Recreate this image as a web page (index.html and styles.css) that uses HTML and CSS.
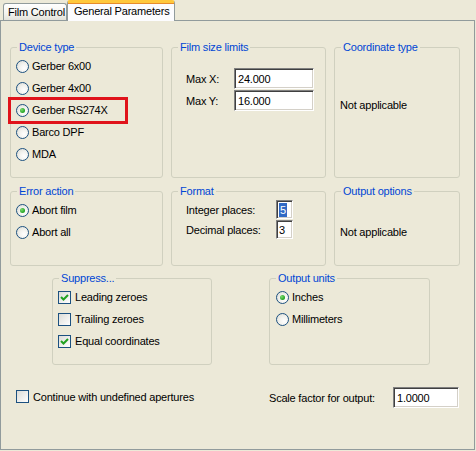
FILE: index.html
```html
<!DOCTYPE html>
<html>
<head>
<meta charset="utf-8">
<link rel="stylesheet" href="styles.css">
</head>
<body>
<div class="window">
  <div class="tabs">
    <div class="tab">Film Control</div>
    <div class="tab active">General Parameters</div>
  </div>
  <div class="panel">
    <div class="row row1">
      <fieldset class="group g-device">
        <legend>Device type</legend>
        <div class="list">
          <div class="opt"><span class="radio"></span><span>Gerber 6x00</span></div>
          <div class="opt"><span class="radio"></span><span>Gerber 4x00</span></div>
          <div class="opt mark"><span class="radio on"></span><span>Gerber RS274X</span><span class="annot"></span></div>
          <div class="opt"><span class="radio"></span><span>Barco DPF</span></div>
          <div class="opt"><span class="radio"></span><span>MDA</span></div>
        </div>
      </fieldset>
      <fieldset class="group g-film">
        <legend>Film size limits</legend>
        <div class="form film-form">
          <span class="lbl">Max X:</span><span class="input wide">24.000</span>
          <span class="lbl">Max Y:</span><span class="input wide">16.000</span>
        </div>
      </fieldset>
      <fieldset class="group g-coord">
        <legend>Coordinate type</legend>
        <div class="na na1">Not applicable</div>
      </fieldset>
    </div>
    <div class="row row2">
      <fieldset class="group g-device">
        <legend>Error action</legend>
        <div class="list">
          <div class="opt"><span class="radio on"></span><span>Abort film</span></div>
          <div class="opt"><span class="radio"></span><span>Abort all</span></div>
        </div>
      </fieldset>
      <fieldset class="group g-film">
        <legend>Format</legend>
        <div class="form fmt-form">
          <span class="lbl">Integer places:</span><span class="input small"><span class="sel">5</span></span>
          <span class="lbl">Decimal places:</span><span class="input small">3</span>
        </div>
      </fieldset>
      <fieldset class="group g-coord">
        <legend>Output options</legend>
        <div class="na na2">Not applicable</div>
      </fieldset>
    </div>
    <div class="row row3">
      <fieldset class="group g-suppress">
        <legend>Suppress...</legend>
        <div class="list">
          <div class="opt cb"><span class="check on"><svg viewBox="0 0 11 11" width="11" height="11"><path d="M2 5 L4.5 7.5 L9 3" fill="none" stroke="#21A121" stroke-width="2"/></svg></span><span>Leading zeroes</span></div>
          <div class="opt cb"><span class="check"></span><span>Trailing zeroes</span></div>
          <div class="opt cb"><span class="check on"><svg viewBox="0 0 11 11" width="11" height="11"><path d="M2 5 L4.5 7.5 L9 3" fill="none" stroke="#21A121" stroke-width="2"/></svg></span><span>Equal coordinates</span></div>
        </div>
      </fieldset>
      <fieldset class="group g-units">
        <legend>Output units</legend>
        <div class="list">
          <div class="opt"><span class="radio on"></span><span>Inches</span></div>
          <div class="opt"><span class="radio"></span><span>Millimeters</span></div>
        </div>
      </fieldset>
    </div>
    <div class="row bottom">
      <div class="opt cb cont"><span class="check"></span><span>Continue with undefined apertures</span></div>
      <div class="scale"><span class="lbl scale-lbl">Scale factor for output:</span><span class="input scale-in">1.0000</span></div>
    </div>
  </div>
</div>
</body>
</html>
```
FILE: styles.css
```css
* { box-sizing: border-box; }
html, body { margin: 0; padding: 0; }
body {
  background: #ECE9D8;
  font-family: "Liberation Sans", Arial, sans-serif;
  font-size: 11px;
  letter-spacing: -0.2px;
  color: #000;
  width: 476px;
  height: 451px;
  overflow: hidden;
}
.window { width: 476px; height: 451px; }
.tabs {
  height: 20px;
  display: flex;
  align-items: flex-end;
  padding-left: 3px;
  position: relative;
  z-index: 2;
}
.tab {
  height: 17px;
  width: 64px;
  border: 1px solid #919B9C;
  border-bottom: none;
  border-radius: 3px 3px 0 0;
  background: linear-gradient(#FFFFFF, #F3F3EF 60%, #E3E2DA);
  padding: 2px 0 0 4px;
  line-height: 13px;
  white-space: nowrap;
}
.tab.active {
  width: 108px;
  height: 21px;
  margin-bottom: -1px;
  background: #FCFCFE;
  border-top: 3px solid #FFC83C;
  padding-top: 2px;
  padding-left: 6px;
  box-shadow: inset 0 1px 0 #E68B2C;
  border-radius: 3px 3px 0 0;
}
.panel {
  width: 475px;
  height: 430px;
  border: 1px solid #919B9C;
  padding: 20px 0 0 9px;
  display: flex;
  flex-direction: column;
}
.row { display: flex; }
.row1 { gap: 8px; }
.row2 { gap: 8px; margin-top: 7px; }
.row3 { gap: 57px; margin-top: 6px; margin-left: 42px; }

.group {
  margin: 0;
  padding: 0;
  min-inline-size: 0;
  border: 1px solid #D0D0BF;
  border-radius: 3px;
}
.group legend {
  color: #0046D5;
  padding: 0 2px;
  margin-left: 6px;
  line-height: 13px;
  height: 13px;
}
.row1 .group { height: 137px; }
.row2 .group { height: 81px; }
.row3 .group { height: 93px; }
.g-device { width: 153px; }
.g-film { width: 155px; }
.g-coord { width: 126px; }
.g-suppress { width: 160px; }
.g-units { width: 161px; }

.list { padding: 1px 0 0 5px; display: flex; flex-direction: column; }
.g-units .list { padding-left: 6px; }
.opt {
  height: 22px;
  display: flex;
  align-items: center;
  gap: 3px;
  white-space: nowrap;
}
.opt.mark { position: relative; }
.annot {
  position: absolute;
  left: -8px;
  top: -2px;
  width: 120px;
  height: 27px;
  border: 3px solid #E0131B;
}
.radio {
  width: 13px;
  height: 13px;
  border-radius: 50%;
  border: 1px solid #1C5180;
  background: radial-gradient(circle at 65% 65%, #FFFFFF 0%, #F2F2EE 45%, #D8D8D0 100%);
  display: inline-flex;
  align-items: center;
  justify-content: center;
  flex: none;
}
.radio.on::after {
  content: "";
  width: 5px;
  height: 5px;
  border-radius: 50%;
  background: radial-gradient(circle at 35% 35%, #7BDB6E, #21A121 70%);
}
.check {
  width: 13px;
  height: 13px;
  border: 1px solid #1C5180;
  background: linear-gradient(135deg, #DCDCD7, #FFFFFF);
  display: inline-flex;
  align-items: center;
  justify-content: center;
  flex: none;
}
.cb { gap: 4px; }

.form {
  display: grid;
  align-items: center;
  row-gap: 1px;
}
.film-form {
  grid-template-columns: 48px 80px;
  padding: 14px 0 0 14px;
}
.fmt-form {
  grid-template-columns: 90px 17px;
  padding: 2px 0 0 14px;
}
.input {
  background: #FFFFFF;
  border: 1px solid;
  border-color: #808080 #FFFFFF #FFFFFF #808080;
  box-shadow: inset 1px 1px 0 #404040, inset -1px -1px 0 #D4D0C8;
  padding: 0 0 0 3px;
  display: flex;
  align-items: center;
  white-space: nowrap;
}
.input.wide { height: 21px; }
.input.small { height: 19px; padding-left: 2px; }
.sel { background: #316AC5; color: #FFF; padding: 1px 1px; line-height: 12px; }

.na { padding-left: 5px; }
.na1 { padding-top: 45px; }
.na2 { padding-top: 28px; }

.bottom {
  margin-top: 22px;
  align-items: center;
  padding-left: 6px;
  padding-right: 15px;
}
.cont { height: 14px; margin-top: -2px; }
.scale { display: flex; align-items: center; margin-left: auto; }
.scale-lbl { width: 124px; }
.scale-in { width: 66px; height: 21px; }
```
